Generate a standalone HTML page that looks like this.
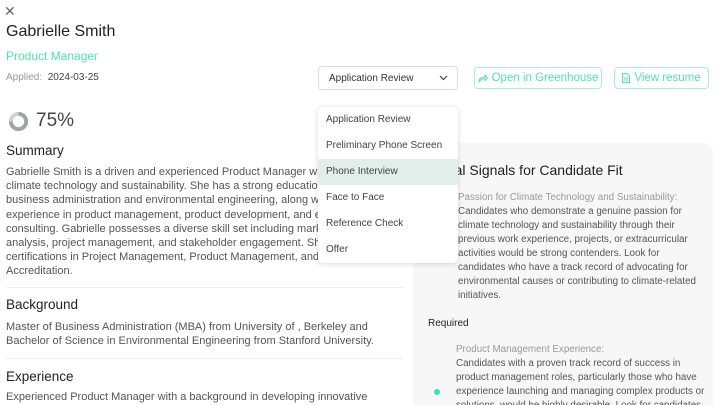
<!DOCTYPE html>
<html><head><style>
*{margin:0;padding:0;box-sizing:border-box}
html,body{width:720px;height:405px;overflow:hidden}
body{background:#fff;font-family:"Liberation Sans",sans-serif;color:#333;position:relative}
.a{position:absolute}
.body{font-size:11px;line-height:14.2px;color:#555}
h2{font-weight:normal;font-size:13.5px;color:#222;position:absolute}
.btn{position:absolute;border:1px solid #a9efd6;border-radius:4px;color:#4fe3b0;font-size:11.5px;display:flex;align-items:center;justify-content:center;gap:4px;white-space:nowrap}
.dd{position:absolute;left:318px;top:107px;width:140px;height:156px;background:#fff;border-radius:5px;box-shadow:0 1px 6px rgba(0,0,0,.15)}
.dd div{height:26px;line-height:26px;padding-left:8px;font-size:10px;color:#444}
</style></head><body>
<div class="a" style="left:4px;top:3px;font-size:14px;color:#666">✕</div>
<div class="a" style="left:6px;top:23px;font-size:16px;color:#222">Gabrielle Smith</div>
<div class="a" style="left:6px;top:49px;font-size:12px;color:#4fe3b0">Product Manager</div>
<div class="a" style="left:6px;top:72px;font-size:10px;color:#999">Applied:&nbsp; <span style="color:#444">2024-03-25</span></div>
<svg class="a" style="left:8px;top:111px" width="21" height="21" viewBox="0 0 22 22"><circle cx="11" cy="11" r="8" fill="none" stroke="#ccd1cf" stroke-width="4"/><path d="M11 3 A8 8 0 1 1 3 11" fill="none" stroke="#9da6a2" stroke-width="4"/></svg>
<div class="a" style="left:36px;top:110px;font-size:19px;color:#444">75%</div>
<h2 style="left:6px;top:143px">Summary</h2>
<div class="a body" style="left:6px;top:165px;width:400px">Gabrielle Smith is a driven and experienced Product Manager with<br>climate technology and sustainability. She has a strong education<br>business administration and environmental engineering, along wi<br>experience in product management, product development, and e<br>consulting. Gabrielle possesses a diverse skill set including mark<br>analysis, project management, and stakeholder engagement. She<br>certifications in Project Management, Product Management, and<br>Accreditation.</div>
<div class="a" style="left:6px;top:287px;width:397px;height:1px;background:#eee"></div>
<h2 style="left:6px;top:297px">Background</h2>
<div class="a body" style="left:6px;top:320px">Master of Business Administration (MBA) from University of , Berkeley and<br>Bachelor of Science in Environmental Engineering from Stanford University.</div>
<div class="a" style="left:6px;top:358px;width:397px;height:1px;background:#eee"></div>
<h2 style="left:6px;top:369px">Experience</h2>
<div class="a body" style="left:6px;top:390px;height:15px;overflow:hidden">Experienced Product Manager with a background in developing innovative</div>

<div class="a" style="left:413px;top:143px;width:300px;height:262px;background:#f7f7f7;border-radius:10px 10px 0 0"></div>
<div class="a" style="left:404px;top:162px;font-size:14px;color:#222">Additional Signals for Candidate Fit</div>
<div class="a body" style="left:458px;top:191px;width:250px;font-size:9.8px;line-height:14px"><span style="color:#999">Passion for Climate Technology and Sustainability:</span><br>Candidates who demonstrate a genuine passion for<br>climate technology and sustainability through their<br>previous work experience, projects, or extracurricular<br>activities would be strong contenders. Look for<br>candidates who have a track record of advocating for<br>environmental causes or contributing to climate-related<br>initiatives.</div>
<div class="a" style="left:428px;top:318px;font-size:10px;color:#222">Required</div>
<div class="a body" style="left:456px;top:343px;width:260px;height:62px;overflow:hidden;font-size:9.8px;line-height:14px"><span style="color:#999">Product Management Experience:</span><br>Candidates with a proven track record of success in<br>product management roles, particularly those who have<br>experience launching and managing complex products or<br>solutions, would be highly desirable. Look for candidates</div>
<div class="a" style="left:434px;top:389px;width:6px;height:6px;border-radius:50%;background:#3fe0b0"></div>

<div class="a" style="left:318px;top:66px;width:140px;height:24px;border:1px solid #ddd;border-radius:4px;font-size:10px;color:#333;padding:6px 10px">Application Review<svg style="position:absolute;right:9px;top:8px" width="9" height="6" viewBox="0 0 9 6"><path d="M1 1l3.5 3.5L8 1" fill="none" stroke="#444" stroke-width="1.2"/></svg></div>
<div class="btn" style="left:474px;top:67px;width:128px;height:22px"><svg width="10" height="9" viewBox="0 0 10 9"><path d="M1 8C1 4 4 3 7 3V1l2.5 2.8L7 6.5V4.6C4.5 4.6 2.5 5.5 1 8z" fill="none" stroke="#4fe3b0" stroke-width="1"/></svg>Open in Greenhouse</div>
<div class="btn" style="left:614px;top:67px;width:95px;height:22px"><svg width="8" height="10" viewBox="0 0 8 10"><path d="M.5.5h4.5l2.5 2.5v6.5h-7z M2 5h4M2 7h4" fill="none" stroke="#4fe3b0" stroke-width="1"/></svg>View resume</div>

<div class="dd">
<div>Application Review</div><div>Preliminary Phone Screen</div><div style="background:#e1eeea">Phone Interview</div><div>Face to Face</div><div>Reference Check</div><div>Offer</div>
</div>
</body></html>
